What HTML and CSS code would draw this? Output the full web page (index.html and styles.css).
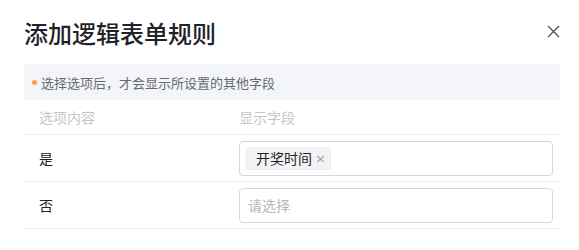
FILE: index.html
```html
<!DOCTYPE html>
<html lang="zh-CN">
<head>
<meta charset="utf-8">
<link rel="stylesheet" href="styles.css">
</head>
<body>
<div class="dialog">
  <div class="head">
    <h1 class="title">添加逻辑表单规则</h1>
    <span class="close"><svg width="13" height="13" viewBox="0 0 13 13"><path d="M1 1L12 12M12 1L1 12" stroke="#51565d" stroke-width="1.4" fill="none"/></svg></span>
  </div>
  <div class="tip"><span class="dot"></span>选择选项后，才会显示所设置的其他字段</div>
  <div class="table">
    <div class="row header">
      <div class="c1">选项内容</div>
      <div class="c2">显示字段</div>
    </div>
    <div class="row">
      <div class="c1 label">是</div>
      <div class="c2"><div class="select"><span class="tag">开奖时间<span class="tag-x">×</span></span></div></div>
    </div>
    <div class="row">
      <div class="c1 label">否</div>
      <div class="c2"><div class="select"><span class="ph">请选择</span></div></div>
    </div>
  </div>
</div>
</body>
</html>
```
FILE: styles.css
```css
* { box-sizing: border-box; }
html, body { margin: 0; padding: 0; background: #fff; }
body { font-family: "Noto Sans CJK SC", "Noto Sans", sans-serif; color: #1f2329; }
.dialog { padding: 18px 19px 0 24px; }
.head { display: flex; align-items: center; justify-content: space-between; height: 30px; margin-bottom: 16px; }
.title { margin: 0; font-size: 24px; font-weight: 500; line-height: 30px; color: #1f2329; }
.close { display: flex; margin-right: 0; margin-top: -4px; }
.tip { display: flex; align-items: center; height: 36px; background: #f4f5f9; border-radius: 4px; padding-left: 8px; font-size: 13px; color: #646a73; }
.dot { width: 5px; height: 5px; border-radius: 50%; background: #f7a34a; margin-right: 4px; }
.table { display: flex; flex-direction: column; }
.row { display: flex; align-items: center; height: 47px; border-bottom: 1px solid #ebeef5; }
.row.header { height: 35px; font-size: 14px; color: #c3c6cc; }
.c1 { width: 200px; padding-left: 15px; }
.c2 { flex: 1; padding-left: 15px; padding-right: 7px; }
.label { font-size: 14px; color: #1f2329; }
.select { height: 35px; border: 1px solid #d3d6de; border-radius: 4px; display: flex; align-items: center; padding-left: 6px; }
.tag { display: inline-flex; align-items: center; height: 23px; padding: 0 4px 0 9px; background: #f2f3f5; border: 1px solid #eceef1; border-radius: 3px; font-size: 14px; color: #1f2329; }
.tag-x { font-size: 13px; color: #9ca0a7; margin-left: 3px; font-family: "DejaVu Sans", sans-serif; }
.ph { font-size: 14px; color: #b5b8be; padding-left: 2px; }
```
